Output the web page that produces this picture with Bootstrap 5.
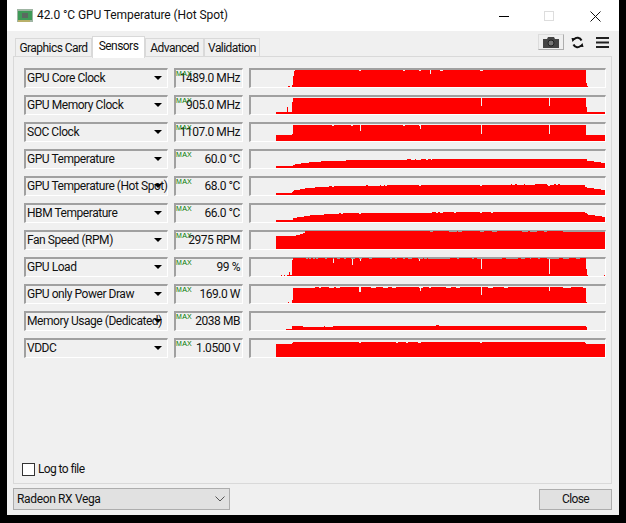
<!DOCTYPE html>
<html lang="en">
<head>
<meta charset="utf-8">
<title>GPU-Z Sensors</title>
<link href="https://cdn.jsdelivr.net/npm/bootstrap@5.3.0/dist/css/bootstrap.min.css" rel="stylesheet">
<style>
html,body{margin:0;height:100%;background:#000;overflow:hidden}
body{font-family:Roboto,"Noto Sans",sans-serif;font-size:12px;color:#111}
.win{width:612px;height:515px;margin-left:7px;background:#f0f0f0;display:flex;flex-direction:column}
.titlebar{height:31px;background:#fff;flex:none;padding-right:18px}
.appicon{width:16px;height:13px;margin:0 4px 0 10px}
.wintitle{font-size:12px;line-height:31px;letter-spacing:-.09px}
.tabstrip{height:26px;padding:5px 10px 0 8px;flex:none}
.gz-tab{height:19px;border:1px solid #d9d9d9;border-bottom:0;background:#f0f0f0;line-height:18px;text-align:center;position:relative;top:2px;white-space:nowrap;letter-spacing:-.55px}
.gz-tab.on{height:22px;top:0;background:#fff;line-height:18px;z-index:2}
.tw1{width:77px}.tw2{width:53px}.tw3{width:59px}.tw4{width:56px}
.tools{margin-left:auto;margin-top:-2px;gap:7px}
.cambtn{width:26px;height:16px;background:#efefef;border:1px solid #adadad;border-top-color:#dcdcdc;border-left-color:#dcdcdc}
.burger{margin-left:5px}
.panel{width:599px;height:428px;margin:-1px 0 0 6px;border:1px solid #d9d9d9;flex:none;padding:11px 0 0 10px;position:relative;z-index:1}
.srow{height:20px;margin-bottom:7px;gap:6px}
.sunken{border:2px solid #a0a0a0;border-right:1px solid #fff;border-bottom:1px solid #fff;position:relative;height:20px;background:#f0f0f0}
.namebox{width:144px;padding-left:1px;line-height:16px;white-space:nowrap;overflow:visible;letter-spacing:-.45px}
.namebox i{position:absolute;right:5px;top:6px;border:4px solid transparent;border-top:4px solid #000;border-bottom:0;width:0;height:0}
.valbox{width:69px;text-align:right;padding-right:2px;line-height:16px;white-space:nowrap;letter-spacing:-.45px}
.valbox b{position:absolute;left:0;top:-1px;font:normal 7px/9px "Liberation Sans",sans-serif;color:#007800;letter-spacing:.3px}
.graph{width:357px}
.graph svg{display:block;position:absolute;left:0;top:0;overflow:visible}
.logline{position:absolute;left:8px;bottom:7px;gap:3px;line-height:14px;letter-spacing:-.6px}
.logbox{width:13px;height:13px;background:#fff;border:1px solid #333}
.footer{padding:4px 7px 0 6px;flex:none}
.devsel{width:217px;height:22px;background:#e1e1e1;border:1px solid #adadad;padding-left:3px;line-height:20px;letter-spacing:-.35px}
.closebtn{width:73px;height:21px;margin-top:1px;background:#e1e1e1;border:1px solid #adadad;line-height:19px;text-align:center;letter-spacing:-.6px}
</style>
</head>
<body>
<div class="win">
  <div class="titlebar d-flex align-items-center">
    <svg class="appicon" viewBox="0 0 16 13"><rect width="16" height="13" fill="#9fb5a3"/><rect x="1" y="2" width="14" height="9" fill="#3f9a58"/><rect x="5" y="4" width="6" height="5" fill="#5a6a60"/><rect x="1" y="11" width="12" height="2" fill="#b9b06a"/></svg>
    <span class="wintitle">42.0 °C GPU Temperature (Hot Spot)</span>
    <svg class="ms-auto" width="112" height="14" viewBox="0 0 112 14"><path d="M10 7.5H20" stroke="#000"/><rect x="55.5" y="2.5" width="9" height="9" fill="none" stroke="#ddd"/><path d="M101.500 2.500l10 10M111.500 2.500l-10 10" stroke="#111" fill="none"/></svg>
  </div>
  <div class="tabstrip d-flex align-items-start">
    <div class="gz-tab tw1">Graphics Card</div>
    <div class="gz-tab on tw2">Sensors</div>
    <div class="gz-tab tw3">Advanced</div>
    <div class="gz-tab tw4">Validation</div>
    <div class="tools d-flex align-items-center">
      <div class="cambtn d-flex align-items-center justify-content-center">
        <svg width="16" height="11" viewBox="0 0 16 11"><path d="M0 2h4l1-2h6l1 2h4v9H0z" fill="#444"/><circle cx="8" cy="6" r="3" fill="#777" stroke="#222"/></svg>
      </div>
      <svg width="13" height="13" viewBox="0 0 13 13"><path d="M10.500 4.500A4.400 4.400 0 0 0 3 3.500M2.500 8.500A4.400 4.400 0 0 0 10 9.500" fill="none" stroke="#111" stroke-width="2"/><path d="M.5 2l4.500.2L1.500 6zM12.500 11L8 10.800 11.500 7z" fill="#111"/></svg>
      <svg class="burger" width="13" height="11" viewBox="0 0 13 11"><path d="M0 1h13M0 5.500h13M0 10h13" stroke="#222" stroke-width="2"/></svg>
    </div>
  </div>
  <div class="panel">
    <div id="rows"></div>
    <div class="logline d-flex align-items-center"><span class="logbox"></span><span>Log to file</span></div>
  </div>
  <div class="footer d-flex justify-content-between align-items-start">
    <div class="devsel d-flex align-items-center justify-content-between"><span>Radeon RX Vega</span><svg class="me-1" width="10" height="6" viewBox="0 0 10 6"><path d="M.5.500L5 5 9.500.500" fill="none" stroke="#555"/></svg></div>
    <div class="closebtn">Close</div>
  </div>
</div>
<script>
var N=[
["GPU Core Clock","1489.0 MHz","37 16 39 17 41 15 42 6 43 1 44 0 108 1 110 0 152 1 154 0 168 1 170 0 179 4 180 0 189 1 192 0 229 1 232 0 335 13 336 16 337"],
["GPU Memory Clock","905.0 MHz","25 15 36 10 37 15 41 5 42 1 230 9 231 1 298 9 299 1 335 10 336 15 354"],
["SOC Clock","1107.0 MHz","25 11 41 10 42 1 81 2 83 1 100 2 102 1 109 7 110 1 152 2 154 1 168 2 169 5 170 1 230 10 231 1 298 10 299 1 335 11 354"],
["GPU Temperature","60.0 °C","25 15 42 14 44 13 50 12 58 11 70 10 95 9 156 8 160 9 164 8 165 9 170 8 175 9 177 8 180 9 181 8 334 8 336 10 343 11 350 12 354"],
["GPU Temperature (Hot Spot)","68.0 °C","25 15 41 14 42 13 43 12 49 11 54 10 64 9 78 8 81 9 83 8 115 7 117 8 129 7 130 8 133 7 134 8 136 7 168 8 170 7 229 8 231 7 260 6 261 7 264 6 266 7 273 6 274 7 284 6 296 7 297 8 299 7 303 6 305 7 307 6 309 7 334 9 336 10 343 11 350 12 354"],
["HBM Temperature","66.0 °C","25 15 42 13 46 12 53 11 59 10 73 9 88 8 90 9 92 8 108 9 110 8 181 7 185 8 187 7 189 8 192 7 203 8 205 7 229 8 231 7 240 8 242 7 334 8 336 9 337 10 344 11 351 12 354"],
["Fan Speed (RPM)","2975 RPM","25 4 45 3 49 2 52 1 54 -1 179 0 182 -1 198 0 206 -1 207 0 211 -1 229 0 233 -1 241 0 246 -1 271 0 277 -1 279 0 286 -1 293 0 296 -1 312 0 335 0 354"],
["GPU Load","99 %","30 16 31 17 33 16 34 17 36 16 38 13 39 16 41 1 42 -1 55 0 57 -1 58 0 60 -1 62 0 64 -1 65 0 67 -1 74 0 76 -1 82 4 83 -1 86 0 89 -1 93 0 95 -1 100 0 101 6 102 0 104 -1 108 0 109 2 110 0 111 -1 118 0 121 -1 139 0 141 -1 144 0 146 -1 152 0 154 -1 157 0 161 -1 167 0 168 2 169 0 172 -1 173 0 176 -1 177 0 199 -1 206 0 208 -1 221 0 223 -1 226 0 230 10 231 0 236 0 251 -1 255 0 267 -1 270 0 274 -1 279 0 280 -1 287 0 289 -1 296 0 298 15 299 0 308 -1 312 0 318 -1 325 0 329 -1 335 10 336 16 337 17 353 16 354"],
["GPU only Power Draw","169.0 W","37 16 38 17 41 14 42 2 64 1 68 2 70 1 78 2 83 1 85 2 89 1 108 6 110 1 120 2 125 1 132 2 137 1 141 2 145 1 168 2 169 5 170 2 172 1 178 2 180 1 195 2 200 1 205 2 209 1 230 9 231 1 237 2 242 1 253 2 257 1 298 5 299 1 312 2 320 1 332 2 335 16 336"],
["Memory Usage (Dedicated)","2038 MB","35 16 41 13 52 14 73 13 74 14 82 13 185 12 188 13 335 14 336"],
["VDDC","1.0500 V","25 4 41 3 42 2 108 3 110 2 145 3 147 2 155 3 157 2 167 3 170 2 229 3 231 2 334 3 335 4 354"]
];
var h="";
N.forEach(function(r){
  var a=r[2].split(" ").map(Number),d="M"+a[0]+" 17",i;
  for(i=0;i<a.length-1;i+=2){d+="V"+a[i+1]+"H"+a[i+2];}
  d+="V17Z";
  h+='<div class="srow d-flex"><div class="sunken namebox">'+r[0]+'<i></i></div><div class="sunken valbox"><b>MAX</b>'+r[1]+'</div><div class="sunken graph"><svg width="354" height="17" viewBox="0 0 354 17" shape-rendering="crispEdges"><path fill="#f00" d="'+d+'"/></svg></div></div>';
});
document.getElementById("rows").innerHTML=h;
</script>
<script src="https://cdn.jsdelivr.net/npm/bootstrap@5.3.0/dist/js/bootstrap.bundle.min.js"></script>
</body>
</html>
